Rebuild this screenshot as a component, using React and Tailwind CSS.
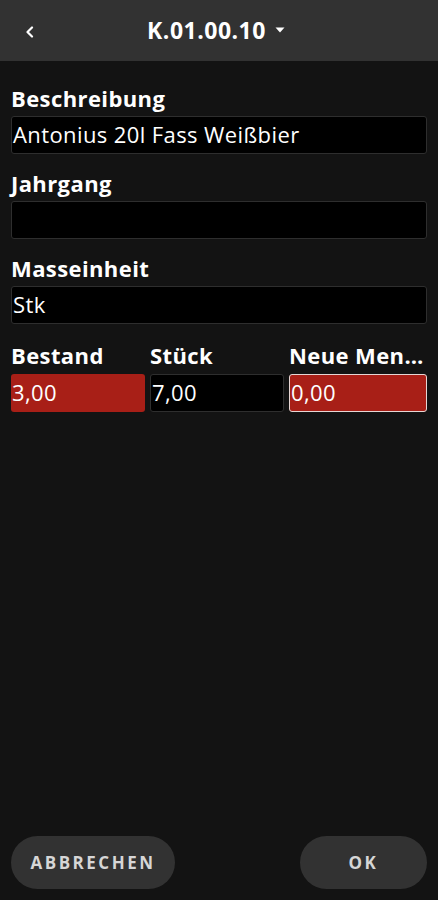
import { useState } from "react";

const font = { fontFamily: "'Open Sans', sans-serif" };

function Field({ label, value, className = "" }) {
	return (
		<div className={className}>
			<div className="h-[28px] leading-[28px] text-[22px] tracking-[0.4px] font-bold text-white">{label}</div>
			<div className="mt-[4px] h-[38px] bg-black border border-[#2e2e2e] rounded-[3px] flex items-center px-[1px] pb-[1px] text-[22px] tracking-[0.4px] text-white">{value}</div>
		</div>
	);
}

export default function App() {
	const [menge] = useState("0,00");

	return (
		<div style={font} className="w-[438px] min-h-[900px] bg-[#131313] flex flex-col">
			<div className="h-[61px] bg-[#323232] flex items-center relative">
				<svg className="absolute left-[25px] top-[26px]" width="10" height="12" viewBox="0 0 10 12">
					<path d="M7 1.5 L2.5 6 L7 10.5" stroke="#fff" strokeWidth="2.2" fill="none" strokeLinecap="round" strokeLinejoin="round" />
				</svg>
				<div className="flex-1 flex justify-center items-center gap-[9px] pr-[6px] pb-[1px]">
					<span className="text-[23px] tracking-[0.5px] font-bold text-white">K.01.00.10</span>
					<svg width="10" height="6" viewBox="0 0 10 6">
						<path d="M0.5 0.5 L9.5 0.5 L5 5.5 Z" fill="#fff" />
					</svg>
				</div>
			</div>

			<div className="flex-1 px-[11px] pt-[23px]">
				<Field label="Beschreibung" value="Antonius 20l Fass Weißbier" />
				<Field label="Jahrgang" value="" className="mt-[15px]" />
				<Field label="Masseinheit" value="Stk" className="mt-[15px]" />

				<div className="mt-[17px] grid grid-cols-[134px_134px_138px] gap-[5px]">
					<div>
						<div className="h-[28px] leading-[28px] text-[22px] tracking-[0.4px] font-bold text-white">Bestand</div>
						<div className="mt-[5px] h-[38px] bg-[#a81f17] rounded-[3px] flex items-center px-[1px] pb-[1px] text-[22px] tracking-[0.4px] text-white">3,00</div>
					</div>
					<div>
						<div className="h-[28px] leading-[28px] text-[22px] tracking-[0.4px] font-bold text-white">Stück</div>
						<div className="mt-[5px] h-[38px] bg-black border border-[#2e2e2e] rounded-[3px] flex items-center px-[1px] pb-[1px] text-[22px] tracking-[0.4px] text-white">7,00</div>
					</div>
					<div className="min-w-0">
						<div className="h-[28px] leading-[28px] text-[22px] tracking-[0.4px] font-bold text-white truncate">Neue Menge</div>
						<div className="mt-[5px] h-[38px] bg-[#a81f17] border border-[#e6d6d4] rounded-[3px] flex items-center px-[1px] pb-[1px] text-[22px] tracking-[0.4px] text-white">{menge}</div>
					</div>
				</div>
			</div>

			<div className="flex justify-between items-center px-[11px] pb-[11px]">
				<button className="w-[164px] h-[53px] rounded-full bg-[#323232] text-[#d6d6d6] text-[17px] font-bold tracking-[2.5px]">ABBRECHEN</button>
				<button className="w-[127px] h-[53px] rounded-full bg-[#323232] text-[#d6d6d6] text-[17px] font-bold tracking-[2.5px]">OK</button>
			</div>
		</div>
	);
}
